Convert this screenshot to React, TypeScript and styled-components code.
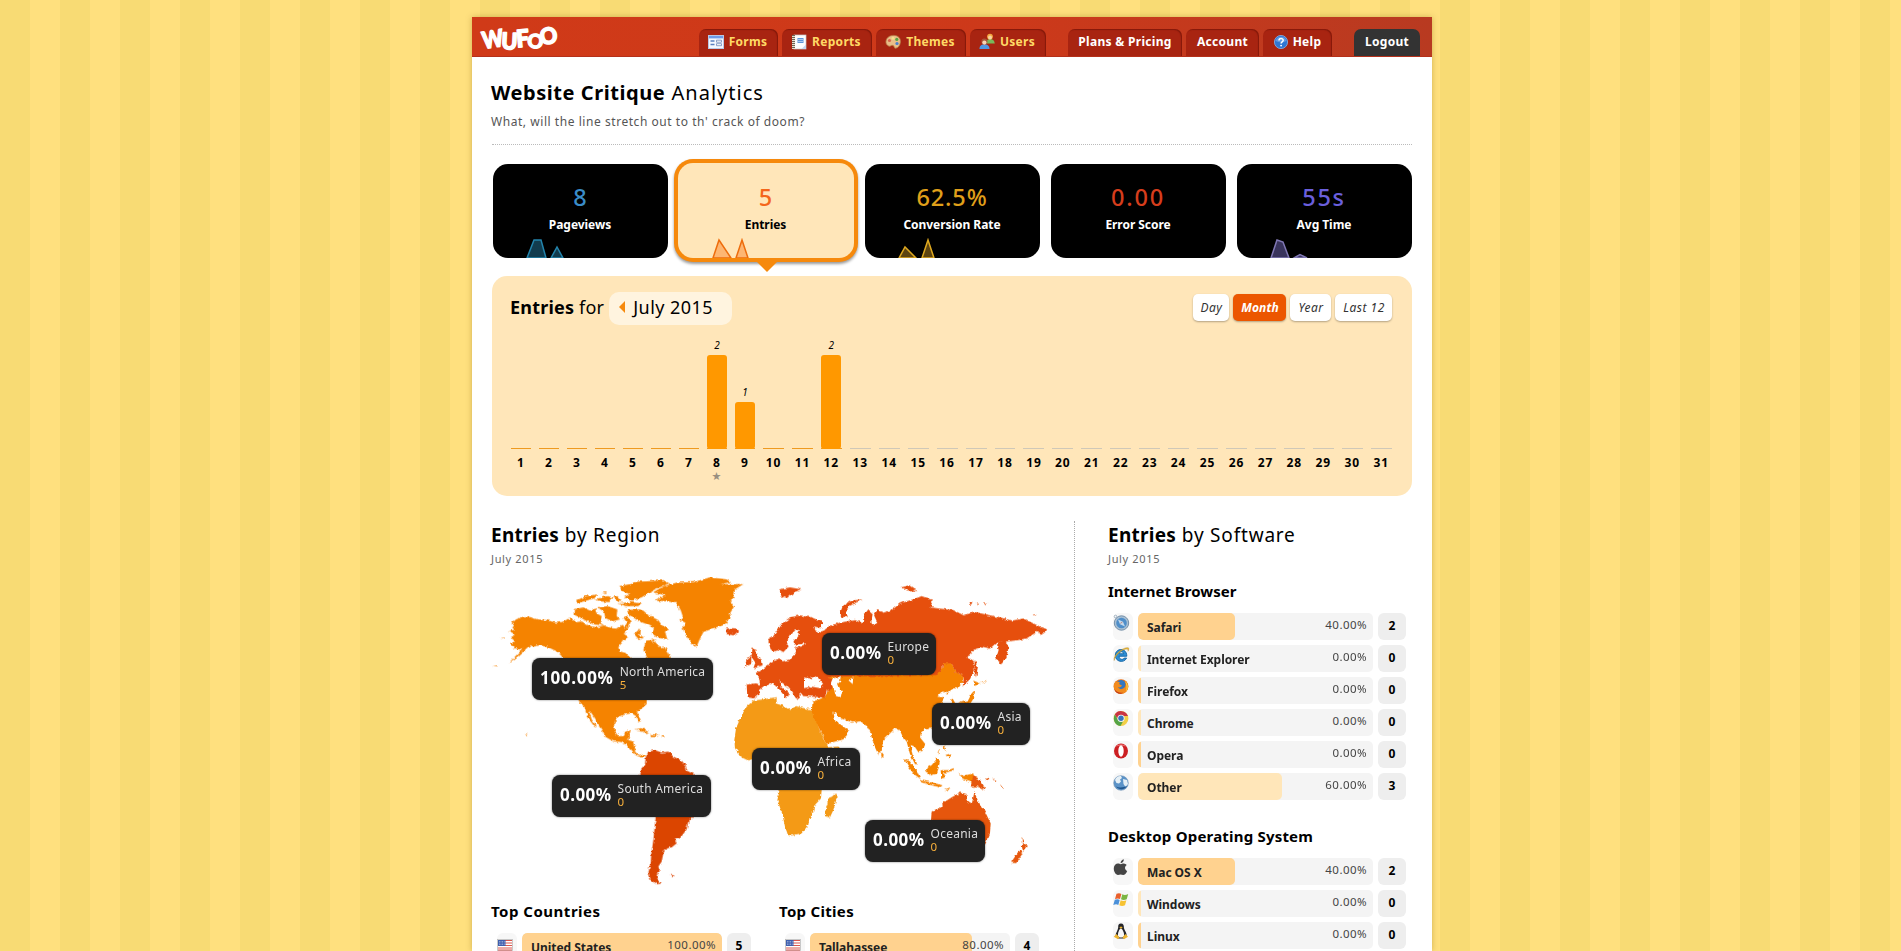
import React from "react";
import styled, { createGlobalStyle, css } from "styled-components";

const Global = createGlobalStyle`
  * { box-sizing: border-box; }
  html, body { margin: 0; padding: 0; height: 951px; overflow: hidden; }
  body {
    font-family: "Noto Sans", "Open Sans", sans-serif;
    font-size: 12px;
    color: #000;
    background: repeating-linear-gradient(90deg, #f8db74 0 30px, #ffe07e 30px 60px);
  }
  h1, h2, h3, p { margin: 0; font-weight: 400; }
`;

const Page = styled.div`
  width: 960px;
  height: 934px;
  margin: 17px 0 0 472px;
  background: #fff;
  overflow: hidden;
  box-shadow: 0 0 6px rgba(120, 90, 0, 0.35);
`;

const Header = styled.header`
  display: flex;
  justify-content: space-between;
  height: 40px;
  padding: 0 12px 0 8px;
  background: linear-gradient(90deg, #d03a18 0%, #cd391a 55%, #b83a21 100%);
  border-bottom: 1px solid #b5301a;
`;

const Logo = styled.svg`
  width: 84px;
  height: 36px;
  margin-top: 2px;
  overflow: visible;
  text { font: 900 24px Lato, sans-serif; fill: #fff; stroke: #fff; stroke-width: 1.5; stroke-linejoin: round; }
`;

const Nav = styled.nav`
  display: flex;
  gap: 4px;
  padding-top: 12px;
`;

type TabTone = "yellow" | "white" | "dark";
const Tab = styled.a<{ $w: number; $tone: TabTone; $gap?: number }>`
  display: flex;
  align-items: center;
  justify-content: center;
  gap: 5px;
  width: ${(p) => p.$w}px;
  height: 27px;
  margin-left: ${(p) => p.$gap ?? 0}px;
  padding: 0 ${(p) => (p.$tone === "yellow" ? 2 : 0)}px 2px 0;
  border-radius: 7px 7px 0 0;
  font-weight: 700;
  font-size: 12px;
  letter-spacing: 0.3px;
  white-space: nowrap;
  color: ${(p) => (p.$tone === "yellow" ? "#ffd965" : "#fff")};
  background: ${(p) => (p.$tone === "dark" ? "#333" : "#a82411")};
  box-shadow: ${(p) => (p.$tone === "dark" ? "none" : "inset -1px 1px 1px rgba(90, 10, 0, 0.45)")};
`;

const Body = styled.main`
  padding: 0 20px;
`;

const Intro = styled.section`
  height: 88px;
  padding-top: 21px;
  border-bottom: 1px dotted #bbb;
`;

const Title = styled.h1`
  margin-left: -1px;
  font-size: 20px;
  line-height: 30px;
  letter-spacing: 1px;
  b { letter-spacing: 0.56px; }
`;

const Tagline = styled.p`
  margin: 5px 0 0 -1px;
  font-size: 12px;
  line-height: 18px;
  letter-spacing: 0.55px;
  color: #555;
`;

const Cards = styled.div`
  display: flex;
  gap: 11px;
  height: 113px;
  padding: 19px 0 0 1px;
`;

const Spark = styled.svg`
  position: absolute;
  right: 0;
  bottom: 0;
`;

const Card = styled.div<{ $active?: boolean }>`
  position: relative;
  width: 175px;
  height: 94px;
  padding: 18px 1px 0 0;
  border-radius: 15px;
  text-align: center;
  background: #000;
  color: #fff;
  ${(p) =>
    p.$active &&
    css`
      width: 176px;
      height: 95px;
      margin: -1px 0 0 -1px;
      padding-top: 19px;
      background: #ffe6b9;
      color: #000;
      box-shadow: 0 0 0 4px #f6890c, 0 2px 3px 4px rgba(0, 0, 0, 0.4);
    `}
`;

const Pointer = styled.div`
  position: absolute;
  left: 79px;
  top: 99px;
  border: 10px solid transparent;
  border-top-color: #f6890c;
  border-bottom: 0;
`;

const Figure = styled.div<{ $c: string; $ls: number }>`
  font-size: 23.5px;
  font-weight: 500;
  line-height: 30px;
  letter-spacing: ${(p) => p.$ls}px;
  color: ${(p) => p.$c};
`;

const Caption = styled.div`
  margin-top: 5px;
  font-size: 12px;
  font-weight: 700;
  line-height: 16px;
  letter-spacing: -0.05px;
`;

const Panel = styled.section`
  height: 220px;
  margin-top: 18px;
  padding: 16px 15px 0;
  border-radius: 15px;
  background: #ffe6b9;
`;

const PanelHead = styled.div`
  display: flex;
  align-items: center;
  justify-content: space-between;
  height: 33px;
  padding: 0 5px 0 3px;
`;

const PanelTitle = styled.h2`
  display: flex;
  align-items: center;
  gap: 5px;
  font-size: 18px;
  letter-spacing: 0.2px;
  > span:first-child { padding-bottom: 3px; }
`;

const MonthPill = styled.span`
  display: flex;
  align-items: center;
  gap: 8px;
  width: 123px;
  height: 33px;
  padding: 0 0 3px 10px;
  border-radius: 10px;
  background: #fff4df;
  letter-spacing: 0.45px;
`;

const PrevArrow = styled.i`
  border: 6px solid transparent;
  border-left: 0;
  border-right: 6px solid #f6890c;
`;

const Ranges = styled.div`
  display: flex;
  gap: 4px;
  padding-bottom: 2px;
`;

const Range = styled.button<{ $w: number; $on?: boolean }>`
  width: ${(p) => p.$w}px;
  height: 27px;
  padding: 0 0 0 1px;
  border: 0;
  border-radius: 5px;
  font: italic ${(p) => (p.$on ? 700 : 400)} 12px "Noto Sans", sans-serif;
  letter-spacing: ${(p) => (p.$on ? 0.1 : 0.5)}px;
  white-space: nowrap;
  color: ${(p) => (p.$on ? "#fff" : "#333")};
  background: ${(p) => (p.$on ? "#ec5600" : "#fff")};
  box-shadow: 0 1px 2px rgba(0, 0, 0, 0.3);
`;

const Chart = styled.div`
  display: grid;
  grid-template-columns: repeat(9, 28px) repeat(22, 28.95px);
  margin-top: 4px;
`;

const Day = styled.div`
  display: flex;
  flex-direction: column;
  padding: 0 4px;
  text-align: center;
`;

const Plot = styled.div<{ $future: boolean }>`
  display: flex;
  flex-direction: column;
  justify-content: flex-end;
  height: 120px;
  border-bottom: 1px solid ${(p) => (p.$future ? "#cfc8b8" : "#ee9a20")};
  font: italic 10px/14px "Noto Sans", sans-serif;
`;

const Column = styled.div<{ $n: number }>`
  width: 20px;
  height: ${(p) => p.$n * 47}px;
  margin: 3px 0 -1px;
  border-radius: 3px;
  background: #ff9800;
`;

const DayNo = styled.div`
  margin-top: 6px;
  font-weight: 700;
  font-size: 12px;
  line-height: 16px;
  letter-spacing: 0.9px;
`;

const Star = styled.div`
  margin: -1px 1px 0 0;
  font: 11px/14px "DejaVu Sans", sans-serif;
  color: #998f80;
`;

const Lower = styled.div`
  display: flex;
  margin-top: 25px;
`;

const RegionCol = styled.section`
  width: 583px;
  height: 440px;
  border-right: 1px dotted #aaa;
`;

const SoftCol = styled.section`
  width: 337px;
  padding-left: 34px;
`;

const Heading = styled.h2`
  margin-left: -1px;
  padding-top: 1px;
  font-size: 19px;
  line-height: 26px;
  letter-spacing: 0.8px;
  b { letter-spacing: 0.25px; }
`;

const When = styled.p`
  margin: 3px 0 0 -1px;
  font-size: 11px;
  line-height: 16px;
  letter-spacing: 0.65px;
  color: #666;
`;

const Map = styled.div`
  position: relative;
  height: 323px;
  svg { position: absolute; left: 0; top: 3px; }
`;

const Bubble = styled.div<{ $x: number; $y: number; $w: number }>`
  position: absolute;
  left: ${(p) => p.$x}px;
  top: ${(p) => p.$y}px;
  display: flex;
  align-items: center;
  gap: 6px;
  width: ${(p) => p.$w}px;
  height: 42px;
  padding-left: 8px;
  border-radius: 8px;
  background: #222;
  box-shadow: 0 0 2px rgba(0, 0, 0, 0.6);
  white-space: nowrap;
`;

const BubblePct = styled.b<{ $ls: number }>`
  margin-top: -3px;
  font-size: 17px;
  letter-spacing: ${(p) => p.$ls}px;
  color: #fff;
`;

const BubbleInfo = styled.span`
  display: flex;
  flex-direction: column;
  margin-top: -3px;
  font-size: 12px;
  line-height: 13px;
  letter-spacing: 0.25px;
  color: #ddd;
  em { font-size: 11.5px; font-style: normal; color: #f9b13c; }
`;

const Tops = styled.div`
  display: flex;
  gap: 29px;
`;

const SubHead = styled.h3<{ $top?: number; $ls?: number }>`
  margin: ${(p) => p.$top ?? 0}px 0 0 -1px;
  font-weight: 700;
  font-size: 15px;
  line-height: 20px;
  letter-spacing: ${(p) => p.$ls ?? 0}px;
`;

const List = styled.div`
  display: flex;
  flex-direction: column;
  gap: 5px;
  margin-top: 12px;
`;

const Row = styled.div<{ $wide: boolean }>`
  display: flex;
  gap: 5px;
  height: 27px;
  padding-left: ${(p) => (p.$wide ? 4 : 5)}px;
`;

const IconBox = styled.span<{ $flag?: boolean }>`
  flex: none;
  width: 20px;
  border-radius: 6px;
  background: #f7f7f7;
  svg { display: block; margin: ${(p) => (p.$flag ? 3 : 1)}px 0 0 ${(p) => (p.$flag ? 0 : -0.5)}px; }
`;

const Track = styled.div<{ $w: number }>`
  position: relative;
  display: flex;
  flex: none;
  align-items: center;
  justify-content: space-between;
  width: ${(p) => p.$w}px;
  padding: 0 6px 0 9px;
  border-radius: 5px;
  background: #f4f4f4;
  overflow: hidden;
`;

const Fill = styled.i<{ $light: boolean }>`
  position: absolute;
  inset: 0 auto 0 0;
  border-radius: 5px;
  background: ${(p) => (p.$light ? "#ffe6b9" : "#ffd28f")};
`;

const Name = styled.b`
  position: relative;
  margin-top: 1px;
  font-size: 12px;
  letter-spacing: -0.05px;
  color: #222;
`;

const Pct = styled.span`
  position: relative;
  margin-top: -4px;
  font-size: 11.5px;
  letter-spacing: 0.45px;
  color: #444;
`;

const Count = styled.b<{ $w: number }>`
  flex: none;
  width: ${(p) => p.$w}px;
  border-radius: 6px;
  background: #eee;
  line-height: 26px;
  text-align: center;
`;

/* ---------- icons ---------- */

const FormsIcon = () => (
  <svg width="16" height="14" viewBox="0 0 16 14">
    <rect x=".5" y=".5" width="15" height="13" fill="#f4f8ff" stroke="#b9c6e4" />
    <rect x="1" y="1" width="14" height="2.4" fill="#6f9be6" />
    <path d="M2.5 6h4M2.5 9.5h4" stroke="#5a7fc0" strokeWidth="1.4" />
    <path d="M8.5 5.2h5v2h-5zM8.5 8.7h5v2h-5z" fill="#fff" stroke="#6f86b8" strokeWidth=".8" />
  </svg>
);
const ReportsIcon = () => (
  <svg width="16" height="16" viewBox="0 0 16 16">
    <rect x="3" y="1" width="12" height="14" fill="#fdfdfd" stroke="#c9c9c9" strokeWidth=".7" />
    <path d="M2.5 1v14" stroke="#e8e0d0" strokeWidth="3" />
    <path d="M2.5 1v14" stroke="#6d6454" strokeWidth="3" strokeDasharray="1 1" />
    <rect x="6.5" y="4" width="6" height="5" fill="#5c94d8" />
    <path d="M7 5.5h5M7 7.5h5" stroke="#cfe0f7" strokeWidth=".7" />
    <path d="M10.5 15l4.5-4.5V15z" fill="#c4d6ef" />
  </svg>
);
const ThemesIcon = () => (
  <svg width="16" height="16" viewBox="0 0 16 16">
    <path d="M1 8.6C.6 4 4.500 1.200 9 1.400c4.400.2 6.800 3 6.400 6.600-.3 3.300-2 5.800-4.600 6.200-2 .3-1-2.200-2.800-2.800C6 10.700 5.800 13 3.600 12 2 11.300 1.200 10 1 8.600z" fill="#e9bd88" stroke="#b87f48" strokeWidth=".8" />
    <circle cx="4.500" cy="6.500" r="1.600" fill="#d8664e" />
    <circle cx="8" cy="4.200" r="1.500" fill="#f4e08a" />
    <circle cx="11.800" cy="5.400" r="1.600" fill="#58a545" />
    <circle cx="12" cy="9.500" r="1.600" fill="#4a7fd0" />
  </svg>
);
const UsersIcon = () => (
  <svg width="16" height="17" viewBox="0 0 16 17">
    <path d="M7 10.500c.3-3 1.500-4.500 4-4.500s4.500 1.400 4.800 4.500z" fill="#78b85a" />
    <circle cx="11" cy="3.600" r="2.900" fill="#f3a640" />
    <circle cx="11" cy="4.500" r="1.900" fill="#f9d3a4" />
    <path d="M.4 16c.2-3.200 1.800-4.700 5-4.700s4.900 1.500 5.200 4.700z" fill="#4f97e3" />
    <circle cx="5.400" cy="8.600" r="3" fill="#a8573a" />
    <circle cx="5.400" cy="9.600" r="2.100" fill="#f8d5b4" />
  </svg>
);
const HelpIcon = () => (
  <svg width="14" height="14" viewBox="0 0 14 14">
    <circle cx="7" cy="7" r="6.600" fill="#2f76d2" stroke="#89b2e8" strokeWidth=".8" />
    <path d="M1.500 6a5.600 5.200 0 0 1 11 0q-5.500 2.500-11 0z" fill="#7fb0ee" opacity=".6" />
    <path d="M5 5.400C5 3 9.200 3 9.200 5.300 9.200 6.900 7.100 6.700 7.100 8.500" fill="none" stroke="#fff" strokeWidth="1.500" />
    <circle cx="7.100" cy="10.600" r=".95" fill="#fff" />
  </svg>
);

const icons: Record<string, React.ReactNode> = {
  safari: (
    <>
      <circle cx="8.500" cy="9" r="7.200" fill="#a9c0d4" stroke="#7790a8" />
      <circle cx="8.500" cy="9" r="5.300" fill="#4f8ec9" />
      <path d="M5 5.500l5 2.200 2 4.800-5-2.200z" fill="#c3d9ec" />
      <path d="M7 10.300l1-2 2-.6z" fill="#b87c78" />
      <circle cx="2.500" cy="2.500" r="1.300" fill="none" stroke="#8fa3b5" strokeWidth=".8" />
    </>
  ),
  ie: (
    <>
      <path d="M13.800 10.200H6c.2 3.500 4.200 4 5.200 1.900h2.400C11 17.500 2.200 16 2.300 9.200 2.500 1.600 13.900 1.400 13.800 10.200zM6.100 7.800h4.600C10.300 5 6.500 5 6.100 7.800z" fill="#2d8fd5" stroke="#1868a8" strokeWidth="1" />
      <path d="M1.200 14.500C-.5 9.500 10 .8 15.200 1.700c.9.3.7 1.800-.2 3.600.2-1.300 0-2-.8-2.200C10 2.400 1.500 9.500 1.200 14.500z" fill="#eebc38" stroke="#a87e1c" strokeWidth=".4" />
    </>
  ),
  firefox: (
    <>
      <circle cx="8" cy="8.500" r="7.300" fill="#e8711c" />
      <circle cx="8" cy="6.500" r="4.500" fill="#3477bf" />
      <path d="M1 6C3 2 5 4 7 4.500 5 6 7.500 7 9 7.500 7 10.500 5 9 5 9c2 4 7.500 2 8-2.500 0-2-1-3.500-2-4.500 7 3 5 13.800-3 13.800C2 15.800 0 10.500 1 6z" fill="#f28b1e" />
      <path d="M12 3c3.500 3 3.500 8 1 10.500 1-3.500.5-7.500-1-10.500z" fill="#fbd23f" />
      <path d="M1.200 11c2 3 6 4.500 9 3.500-2.500 2.500-8 1-9-3.500z" fill="#c13a18" />
    </>
  ),
  chrome: (
    <>
      <circle cx="8" cy="8.500" r="7.400" fill="#f1cf47" />
      <path d="M1.800 4.500A7.400 7.400 0 0 1 15 6H8L5 9.500z" fill="#c93444" />
      <path d="M1.800 4.500C-.7 9.500 2 15.500 7.500 15.900L10 11.500 5 10z" fill="#55a447" />
      <circle cx="8" cy="8.300" r="3.600" fill="#f5f5f5" />
      <circle cx="8" cy="8.300" r="2.700" fill="#3473bd" />
    </>
  ),
  opera: (
    <>
      <ellipse cx="8" cy="9" rx="7" ry="7.500" fill="#cc1f22" />
      <path d="M3 4.500c1.500-3 8.500-3 10 0-3-1-7-1-10 0z" fill="#e8686a" />
      <ellipse cx="8" cy="9" rx="2.700" ry="5.800" fill="#fff" />
    </>
  ),
  globe: (
    <>
      <circle cx="8" cy="9" r="7.300" fill="#5b93c8" stroke="#7595b5" strokeWidth=".6" />
      <path d="M2 6c1-3 4-4.500 6-4l1 2-2 1.500 1 2-2 2-2.500-.5zM10 5l4 1 1 4-2.500 3-2-3z" fill="#e6f0f6" />
      <path d="M3 12.500c3 3.500 8 4 11-.5-3 1.500-8 2-11 .5z" fill="#1f568f" />
    </>
  ),
  apple: (
    <path d="M10.800 4.500c1.200 0 2.300.8 2.900 1.500-2.500 1.500-2 5 .5 6-1 2.600-2.500 4-4 4-.9 0-1.700-.6-2.600-.6s-1.700.6-2.600.6C2.700 16 .7 12.500.8 9.300.9 6 3 4.500 4.900 4.500c1.200 0 2 .7 2.800.7s1.700-.7 3.100-.7zM7.600 4.200C7.500 2.300 9 .7 10.800.3c.2 2-1.300 3.800-3.200 3.900z" fill="#444" />
  ),
  windows: (
    <>
      <path d="M3.500 2.800c2-.9 3.400-.7 4.900.1L7 8C5.500 7.200 4 7.200 2 8z" fill="#e9602c" />
      <path d="M9.300 3.300c1.800.9 3.700.8 5.900-.3l-1.500 5.200c-2 1-4 1-5.700.1z" fill="#7bb542" />
      <path d="M1.800 8.800c1.800-.8 3.500-.7 4.900.1L5.300 14c-1.500-.9-3-.8-5 0z" fill="#4b90d9" />
      <path d="M7.700 9.300c1.800.8 3.700.8 5.700-.1L12 14.300c-2 1-4.100.9-5.700 0z" fill="#f7c332" />
    </>
  ),
  linux: (
    <>
      <path d="M8 .5c2.300 0 3 1.700 2.900 4 .2 2.500 3.200 5 2.700 9L11 15.500H5l-2.500-2c0-4 2.500-6 2.700-9C5 2 5.800.5 8 .5z" fill="#26262a" />
      <path d="M7.800 5.500c1.600 0 3.700 4.500 3.200 7.500-1 2-5 2-6 0-.5-3 1.500-7.500 2.800-7.500z" fill="#f6f6f6" />
      <path d="M6.300 4.200L8 3.600l1.700.7L8 5.700z" fill="#efb52d" />
      <path d="M.8 13.800L3.500 11l3 3.500-1.500 1.800zM15 13.800L12.500 11l-3 3.200 1.500 2z" fill="#efb52d" />
    </>
  ),
};

const Glyph = ({ id }: { id: string }) =>
  id === "us" ? (
    <svg width="16" height="17" viewBox="0 0 16 17">
      <rect x=".5" y="3.500" width="15" height="11" fill="#fff" stroke="#bbb" strokeWidth=".8" />
      <path d="M1 4.500h14M1 7h14M1 9.500h14M1 12h14M1 14h14" stroke="#d9574f" strokeWidth="1.200" />
      <rect x="1" y="4" width="7.500" height="6" fill="#3f5fae" />
      <path d="M2 5.500h6M2 7h6M2 8.500h6" stroke="#dfe6f6" strokeWidth=".6" strokeDasharray=".8 .8" />
    </svg>
  ) : (
    <svg width="17" height="17" viewBox="0 0 17 17">{icons[id]}</svg>
  );

/* ---------- data ---------- */

interface CardData {
  v: string; label: string; c: string; ls: number; stroke: string; fill: string; shapes: string[]; on?: boolean;
}
const cards: CardData[] = [
  { v: "8", label: "Pageviews", c: "#3a8cc8", ls: 0, stroke: "#2384ac", fill: "#123c4e", shapes: ["34,20 41,2 48,2 53,20", "58,20 64,9 70,20"] },
  { v: "5", label: "Entries", c: "#f4661b", ls: 0, stroke: "#ee6c0c", fill: "#fdb672", shapes: ["34,20 40,2 52,20", "57,20 63,2 69,20"], on: true },
  { v: "62.5%", label: "Conversion Rate", c: "#e0a01a", ls: 0.9, stroke: "#dfa920", fill: "#5d4410", shapes: ["34,20 40,9 51,20", "57,20 63,2 69,20"] },
  { v: "0.00", label: "Error Score", c: "#d63d1c", ls: 1.8, stroke: "#d63d1c", fill: "none", shapes: [] },
  { v: "55s", label: "Avg Time", c: "#6a5fdc", ls: 1.8, stroke: "#8078b4", fill: "#39345c", shapes: ["34,20 40,2 46,4 52,20", "57,20 63,16.500 70,20"] },
];

const entries: Record<number, number> = { 8: 2, 9: 1, 12: 2 };

const bubbles = [
  { x: 40, y: 91, w: 181, pct: "100.00%", name: "North America", n: 5 },
  { x: 60, y: 208, w: 159, pct: "0.00%", name: "South America", n: 0 },
  { x: 330, y: 66, w: 114, pct: "0.00%", name: "Europe", n: 0 },
  { x: 260, y: 181, w: 108, pct: "0.00%", name: "Africa", n: 0 },
  { x: 440, y: 136, w: 98, pct: "0.00%", name: "Asia", n: 0 },
  { x: 373, y: 253, w: 120, pct: "0.00%", name: "Oceania", n: 0 },
];

interface RowData { icon: string; name: string; pct: string; n: number; fill: number; light?: boolean }
const browsers: RowData[] = [
  { icon: "safari", name: "Safari", pct: "40.00%", n: 2, fill: 41.2 },
  { icon: "ie", name: "Internet Explorer", pct: "0.00%", n: 0, fill: 1.1, light: true },
  { icon: "firefox", name: "Firefox", pct: "0.00%", n: 0, fill: 1.1 },
  { icon: "chrome", name: "Chrome", pct: "0.00%", n: 0, fill: 1.1, light: true },
  { icon: "opera", name: "Opera", pct: "0.00%", n: 0, fill: 1.1 },
  { icon: "globe", name: "Other", pct: "60.00%", n: 3, fill: 61.2, light: true },
];
const systems: RowData[] = [
  { icon: "apple", name: "Mac OS X", pct: "40.00%", n: 2, fill: 41.2 },
  { icon: "windows", name: "Windows", pct: "0.00%", n: 0, fill: 1.1, light: true },
  { icon: "linux", name: "Linux", pct: "0.00%", n: 0, fill: 1.1 },
];

const StatList = ({ rows, track, count }: { rows: RowData[]; track: number; count: number }) => (
  <List>
    {rows.map((r) => (
      <Row key={r.name} $wide={track > 220}>
        <IconBox $flag={r.icon === "us"}><Glyph id={r.icon} /></IconBox>
        <Track $w={track}>
          <Fill $light={!!r.light} style={{ width: `${r.fill}%` }} />
          <Name>{r.name}</Name>
          <Pct>{r.pct}</Pct>
        </Track>
        <Count $w={count}>{r.n}</Count>
      </Row>
    ))}
  </List>
);

const WorldMap = () => (
  <svg width="580" height="320" viewBox="36 30 1740 960">
    <defs>
      <filter id="coast" x="0" y="0" width="100%" height="100%">
        <feTurbulence type="fractalNoise" baseFrequency="0.09" numOctaves="3" seed="4" result="n" />
        <feDisplacementMap in="SourceGraphic" in2="n" scale="11" xChannelSelector="R" yChannelSelector="G" />
      </filter>
    </defs>
    <g filter="url(#coast)">
      <g fill="#f58303">
        <path d="M95 190L108 178 135 168 160 174 172 178 200 180 228 188 245 186 262 178 275 176 290 186 305 184 325 196 350 202 372 196 395 204 412 206 428 194 436 204 440 188 430 172 442 166 452 186 442 206 432 222 445 230 430 242 415 262 420 274 440 280 455 294 480 320 505 300 490 270 498 242 510 240 530 250 545 266 552 258 562 275 572 292 580 320 540 380 500 420 500 432 485 445 470 456 478 470 483 484 476 485 468 468 455 460 440 462 425 466 408 476 402 495 405 515 415 528 430 528 436 515 452 510 448 525 445 540 462 545 466 560 465 575 478 588 492 583 496 592 480 592 465 584 455 570 440 556 425 546 400 544 375 530 366 512 355 495 345 475 333 458 327 452 335 478 350 500 345 502 330 482 318 458 312 440 298 425 260 350 248 292 232 275 205 262 180 256 160 260 150 255 130 275 110 292 85 310 108 287 130 264 118 268 100 264 92 250 105 244 92 232 104 225 85 215 104 208z" />
        <path d="M285 147L310 142 330 152 345 145 350 160 365 168 360 188 372 196 345 194 325 186 300 172 284 165z" />
        <path d="M288 122L318 108 352 103 345 114 312 124 290 130zM345 118L380 108 402 112 385 126 360 124zM366 98L380 97 378 102zM352 142L382 138 412 148 410 168 420 178 398 184 376 174 372 155z" />
        <path d="M418 78L450 72 470 65 500 64 550 60 568 70 545 80 525 88 508 98 485 112 455 122 432 112 448 102 425 92zM412 130L450 126 486 130 478 138 440 138zM400 110L412 108 425 122 410 124z" />
        <path d="M440 150L475 148 490 152 505 165 535 180 545 195 568 208 555 215 562 238 540 234 515 222 522 205 500 192 478 184 448 165zM462 222L480 205 478 225 492 232 478 240zM510 235L530 240 520 244z" />
        <path d="M520 96L552 78 590 68 640 66 690 52 740 58 752 66 722 72 790 72 765 88 762 110 752 125 762 140 750 160 752 175 735 185 745 190 702 204 670 216 658 240 650 260 635 250 620 230 608 205 616 188 598 180 608 168 602 150 590 130 560 124 525 122 555 106z" />
        <path d="M465 508L485 504 508 518 500 522 480 510zM512 522L535 524 530 531 512 531zM545 529h8v3h-8zM136 520l6 2-3 5zM62 232l12 2v3zM38 318l14-2 1 3z" />
      </g>
      <g fill="#db4504">
        <path d="M497 592L505 575 525 570 545 578 565 575 580 590 605 602 618 618 620 632 642 642 665 660 660 720 640 770 625 785 620 808 600 835 585 838 590 850 575 862 558 866 550 880 545 905 535 920 542 935 530 945 532 955 545 970 530 973 512 960 505 935 512 910 514 880 520 840 527 770 505 700 480 645 485 625 495 612zM570 944L584 947 578 952z" />
      </g>
      <g fill="#f49a18" transform="translate(780 0)">
        <path d="M5 465L20 440 40 422 70 418 110 411 110 430 130 438 150 450 168 438 195 445 218 448 224 470 235 500 248 530 258 552 264 562 296 560 285 600 250 650 245 690 243 715 222 738 220 755 208 775 205 795 185 820 145 828 135 800 127 762 112 720 118 695 105 660 90 620 60 602 36 598 25 602 5 592 -15 565 -17 540 -12 505zM286 700L290 715 280 750 270 772 258 768 256 750 263 732 262 715 276 710z" />
      </g>
      <g transform="translate(780 0)">
        <path fill="#f58303" d="M218 425L258 410 262 390 275 380 250 340 588 340 605 330 610 310 635 310 645 335 672 348 665 370 655 385 640 385 622 400 606 393 592 410 614 412 604 430 610 470 580 505 553 508 543 518 540 532 556 552 548 572 536 578 524 560 512 555 518 585 532 612 525 612 510 582 500 545 488 530 480 512 465 505 450 520 430 540 425 570 414 582 402 555 390 515 382 500 362 484 335 488 310 478 295 472 280 455 285 482 305 495 330 515 310 538 258 552 245 520 225 480 215 455z" />
        <path fill="#f58303" d="M705 390L703 412 690 432 650 432 685 420 695 400zM700 362L720 370 703 378zM720 368l20-8-8 8zM424 578L432 588 424 594zM492 597L510 605 530 630 542 657 522 642 505 620zM540 660L575 667 608 676 600 682 545 668zM558 625L575 615 592 594 600 604 592 640 575 646 560 638zM602 630L625 630 642 624 640 632 612 638 618 652 604 656zM612 555L620 575 608 562zM616 585L634 580 630 596zM600 570L592 584 596 570zM615 688L632 682 625 690zM655 638L668 648 700 640 706 676 690 664 668 656zM640 395L636 412 646 430 632 430z" />
        <path fill="#e6500f" d="M84 238L100 228 112 210 130 188 150 172 180 166 215 172 247 186 245 204 222 200 232 218 252 212 268 198 300 188 345 180 368 190 372 165 385 148 398 160 394 188 400 198 412 188 402 165 412 150 430 158 455 150 480 130 520 118 545 108 578 120 572 142 600 146 640 150 672 166 700 155 740 164 780 172 815 182 850 176 880 190 922 210 908 222 890 216 860 235 835 240 800 245 770 248 750 266 725 260 700 270 682 292 700 302 704 325 690 358 668 378 672 348 645 335 635 310 610 310 605 330 588 345 260 350 280 362 275 388 260 390 256 413 215 410 190 408 182 398 178 405 180 417 168 415 155 395 140 378 118 362 125 380 148 400 138 414 118 388 98 370 80 375 60 390 58 402 42 415 22 412 20 374 48 370 60 374 58 355 46 340 72 324 92 310 106 300 128 290 92 268z" />
        <path fill="#e6500f" d="M38 266L50 270 48 285 66 300 68 316 40 325 46 308 34 290zM20 294L34 288 34 312 15 320zM118 88L150 82 185 88 160 98 140 115 124 108zM300 160L308 138 335 122 368 118 332 136 318 150 324 170 305 172zM484 82L508 76 530 92 512 94zM688 124L698 126 692 136zM710 128l8 1-5 3zM732 128l10 0-6 4zM878 164h12l-6 4zM796 242L806 262 800 290 785 312 768 296 776 270 770 250zM704 298L714 322 708 352 703 335zM-45 208L-30 204 -10 205 -2 214 -20 226 -40 222z" />
        <path fill="#fff" d="M168 208L180 212 172 228 160 245 166 254 195 250 190 258 166 262 168 276 150 298 128 304 120 296 104 296 106 270 116 268 130 276 146 260 140 245 152 225zM192 352L212 356 228 346 250 372 240 384 215 380 192 384zM278 356L302 348 300 365 290 375 306 395 302 412 286 406 282 385 272 370zM325 360L340 352 338 372z" />
        <path fill="#e65609" d="M573 782L575 755 600 742 615 725 635 712 660 698 680 702 678 720 695 734 703 696 715 725 735 755 752 790 750 820 736 852 600 850zM845 833L852 850 864 858 850 875 846 862zM838 870L848 880 828 910 813 908 825 890zM700 645L722 660 738 690 715 680 692 680zM735 658l10-4-2 8zM760 655l10 6 -3 3zM780 672l10 14-6-4z" />
      </g>
    </g>
  </svg>
);

export default function App() {
  return (
    <>
      <Global />
      <Page>
        <Header>
          <Logo viewBox="0 0 84 36">
            <text transform="translate(3.500 30) rotate(-9) scale(.84 .98)">W</text>
            <text transform="translate(21 30) rotate(3) scale(.9 .96)">U</text>
            <text transform="translate(37 28.500) rotate(-5) scale(.94 1)">F</text>
            <text transform="translate(46.500 28) rotate(8) scale(.82 .82)">O</text>
            <text transform="translate(61 26) rotate(-8) scale(.9 .94)">O</text>
          </Logo>
          <Nav>
            <Tab $w={79} $tone="yellow"><FormsIcon />Forms</Tab>
            <Tab $w={90} $tone="yellow"><ReportsIcon />Reports</Tab>
            <Tab $w={90} $tone="yellow"><ThemesIcon />Themes</Tab>
            <Tab $w={76} $tone="yellow"><UsersIcon />Users</Tab>
            <Tab $w={114} $tone="white" $gap={18}>Plans &amp; Pricing</Tab>
            <Tab $w={73} $tone="white">Account</Tab>
            <Tab $w={69} $tone="white"><HelpIcon />Help</Tab>
            <Tab $w={66} $tone="dark" $gap={18}>Logout</Tab>
          </Nav>
        </Header>
        <Body>
          <Intro>
            <Title><b>Website Critique</b> Analytics</Title>
            <Tagline>What, will the line stretch out to th' crack of doom?</Tagline>
          </Intro>
          <Cards>
            {cards.map((c) => (
              <Card key={c.label} $active={c.on}>
                <Figure $c={c.c} $ls={c.ls}>{c.v}</Figure>
                <Caption>{c.label}</Caption>
                <Spark width="175" height="20" viewBox="0 0 175 20">
                  {c.shapes.map((s) => (
                    <polygon key={s} points={s} fill={c.fill} stroke={c.stroke} strokeWidth="1.500" />
                  ))}
                </Spark>
                {c.on && <Pointer />}
              </Card>
            ))}
          </Cards>
          <Panel>
            <PanelHead>
              <PanelTitle>
                <span><b>Entries</b> for</span>
                <MonthPill><PrevArrow />July 2015</MonthPill>
              </PanelTitle>
              <Ranges>
                <Range $w={36}>Day</Range>
                <Range $w={53} $on>Month</Range>
                <Range $w={41}>Year</Range>
                <Range $w={57}>Last 12</Range>
              </Ranges>
            </PanelHead>
            <Chart>
              {Array.from({ length: 31 }, (_, i) => i + 1).map((d) => (
                <Day key={d}>
                  <Plot $future={d > 12}>
                    {entries[d] && (
                      <>
                        {entries[d]}
                        <Column $n={entries[d]} />
                      </>
                    )}
                  </Plot>
                  <DayNo>{d}</DayNo>
                  {d === 8 && <Star>★</Star>}
                </Day>
              ))}
            </Chart>
          </Panel>
          <Lower>
            <RegionCol>
              <Heading><b>Entries</b> by Region</Heading>
              <When>July 2015</When>
              <Map>
                <WorldMap />
                {bubbles.map((b) => (
                  <Bubble key={b.name} $x={b.x} $y={b.y} $w={b.w}>
                    <BubblePct $ls={b.pct.length > 5 ? 0.7 : 0.45}>{b.pct}</BubblePct>
                    <BubbleInfo>{b.name}<em>{b.n}</em></BubbleInfo>
                  </Bubble>
                ))}
              </Map>
              <Tops>
                <div>
                  <SubHead $top={11} $ls={0.5}>Top Countries</SubHead>
                  <StatList track={200} count={24} rows={[{ icon: "us", name: "United States", pct: "100.00%", n: 5, fill: 100 }]} />
                </div>
                <div>
                  <SubHead $top={11} $ls={0.3}>Top Cities</SubHead>
                  <StatList track={200} count={24} rows={[{ icon: "us", name: "Tallahassee", pct: "80.00%", n: 4, fill: 81 }]} />
                </div>
              </Tops>
            </RegionCol>
            <SoftCol>
              <Heading><b>Entries</b> by Software</Heading>
              <When>July 2015</When>
              <SubHead $top={14}>Internet Browser</SubHead>
              <StatList rows={browsers} track={235} count={28} />
              <SubHead $top={26} $ls={0.2}>Desktop Operating System</SubHead>
              <StatList rows={systems} track={235} count={28} />
            </SoftCol>
          </Lower>
        </Body>
      </Page>
    </>
  );
}
